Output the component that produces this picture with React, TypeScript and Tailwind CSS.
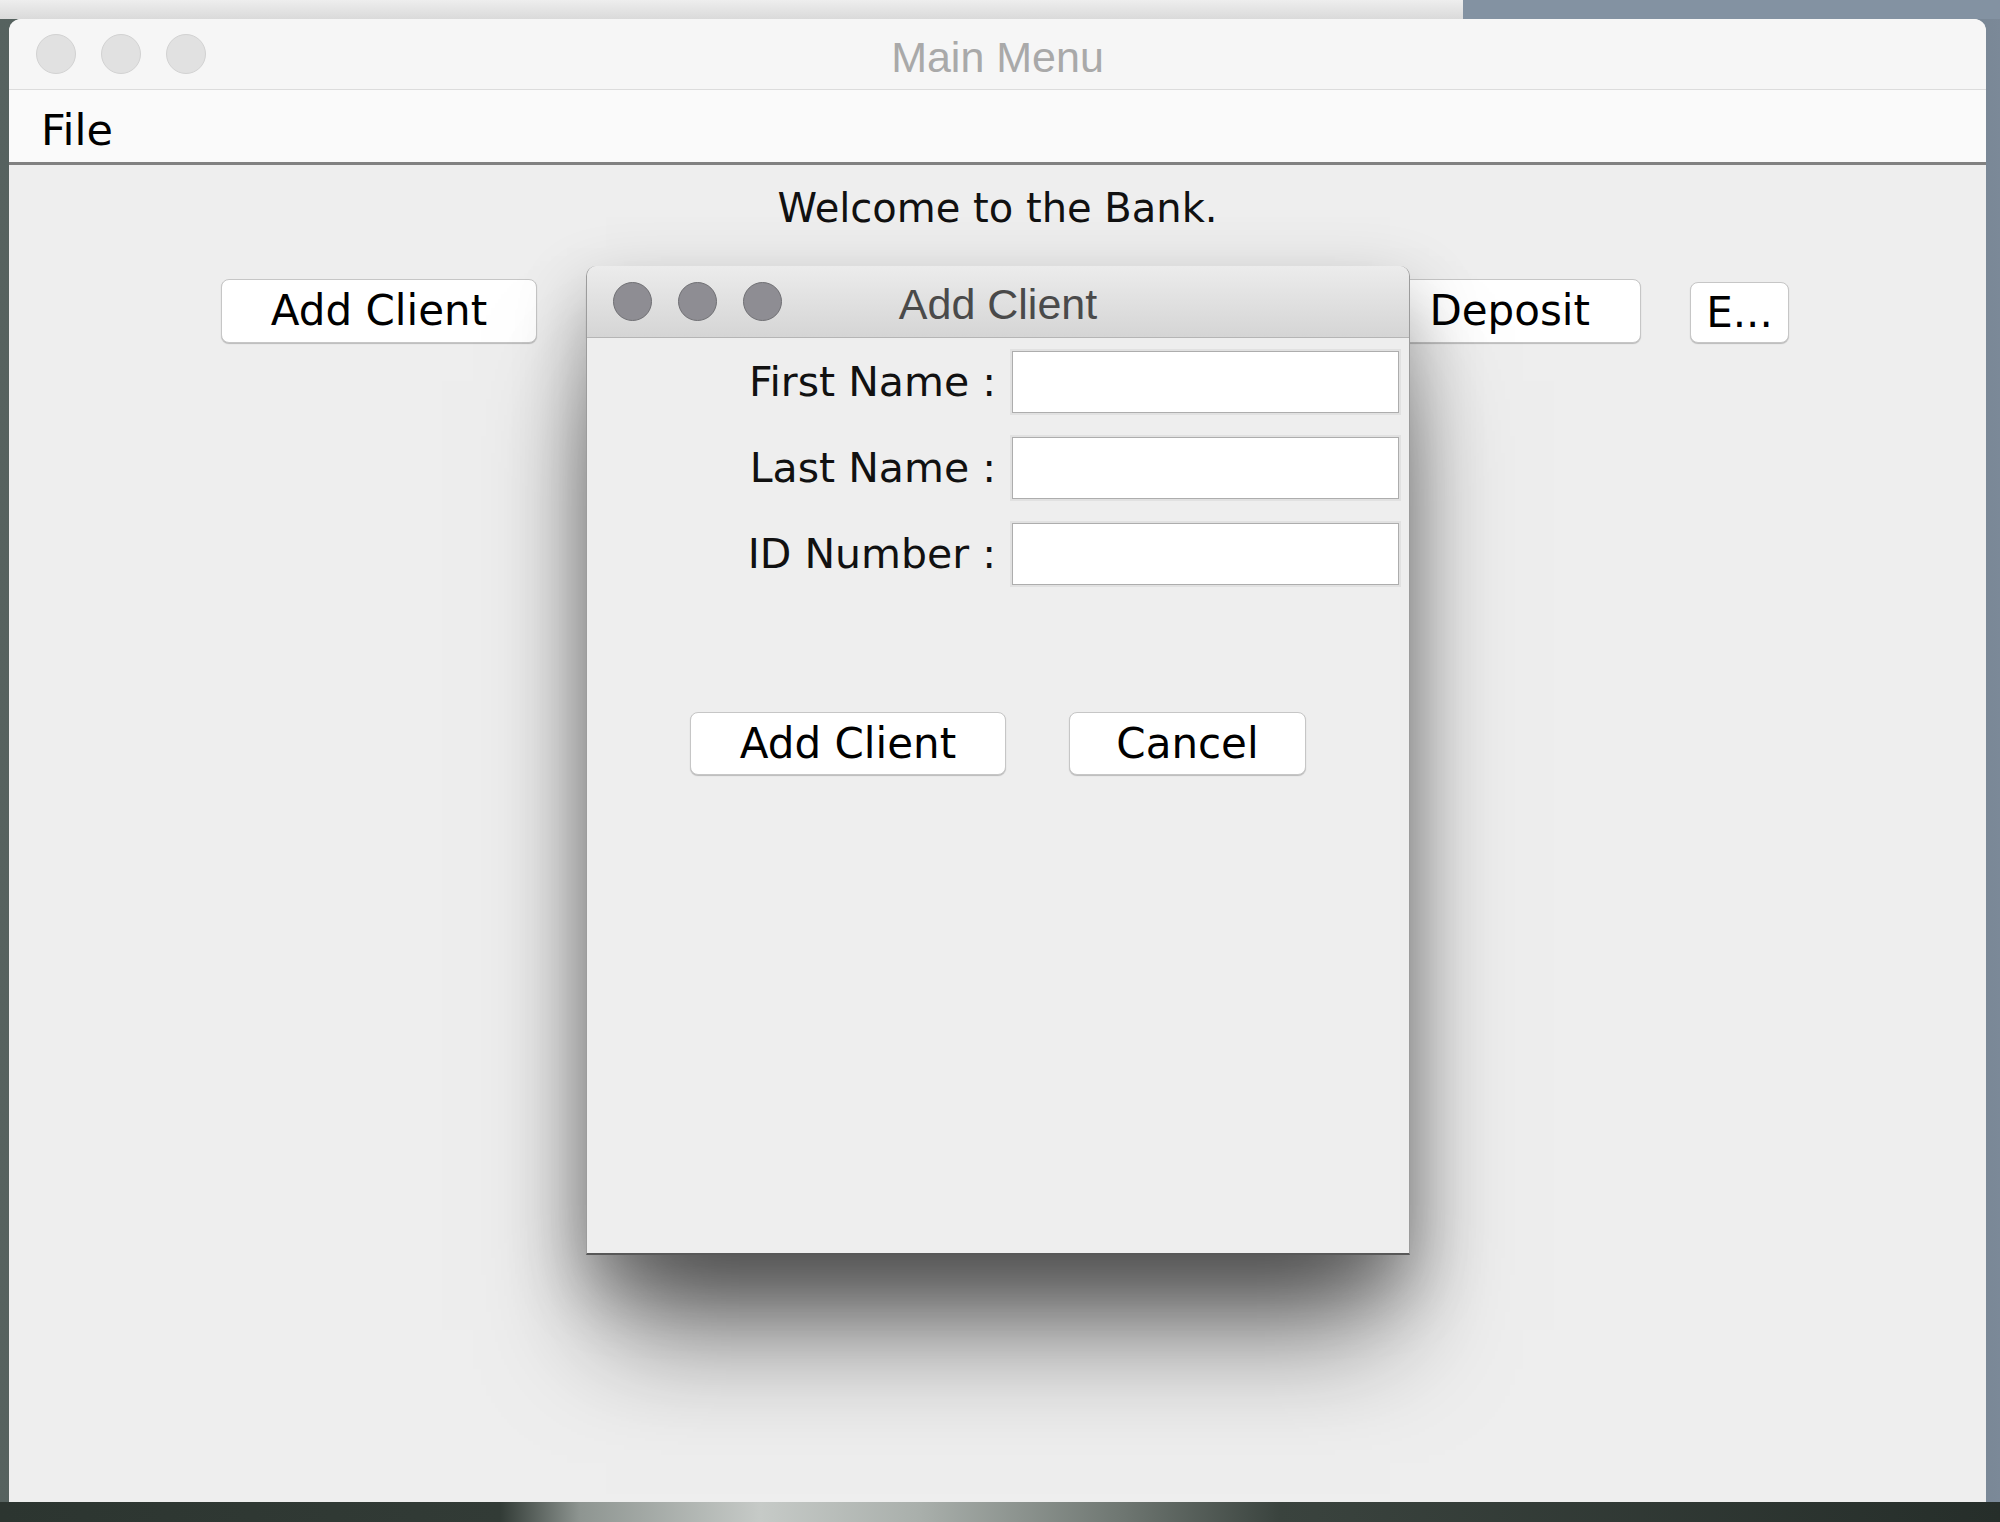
import React from "react";

const ui = { fontFamily: '"DejaVu Sans", Verdana, sans-serif' };
const title = { fontFamily: '"Liberation Sans", Arial, sans-serif' };

function Lights({ active }: { active: boolean }) {
  const dot = active
    ? "w-[39px] h-[39px] rounded-full bg-[#8e8d93] border border-[#707074]"
    : "w-[40px] h-[40px] rounded-full bg-[#e1e1e1] border border-[#d2d2d2]";
  return (
    <div className={`flex items-center h-full ${active ? "pl-[26px] gap-[26px]" : "pl-[27px] gap-[25px]"}`}>
      <div className={dot} />
      <div className={dot} />
      <div className={dot} />
    </div>
  );
}

function Btn({ label, className }: { label?: string; className: string }) {
  return (
    <button
      className={`flex items-center justify-center shrink-0 bg-white border border-[#c6c6c6] rounded-[8px] shadow-[0_1px_1px_rgba(0,0,0,0.22)] text-black text-[42px] leading-none ${className}`}
      style={ui}
    >
      {label}
    </button>
  );
}

function Field({ label }: { label: string }) {
  return (
    <>
      <div className="text-right text-[41px] leading-none text-[#111]" style={ui}>
        {label}
      </div>
      <input
        type="text"
        className="h-[62px] w-[387px] bg-white border border-[#adadad] shadow-[0_0_0_2px_rgba(0,0,0,0.05)] outline-none"
      />
    </>
  );
}

export default function App() {
  return (
    <div className="relative w-[2000px] h-[1522px] overflow-hidden flex bg-[linear-gradient(90deg,#56625f_0%,#3c4744_45%,#566068_80%,#7b8998_100%)]">
      {/* desktop bits peeking round the window */}
      <div className="absolute top-0 left-0 w-[1463px] h-[19px] bg-gradient-to-b from-[#eeeeee] to-[#dadada]" />
      <div className="absolute top-0 left-[1463px] right-0 h-[19px] bg-[#8392a2]" />
      <div className="absolute bottom-0 left-0 right-0 h-[20px] bg-[linear-gradient(90deg,#2c3530_0%,#323b36_25%,#8e9591_29%,#c6cac7_38%,#a9afab_46%,#6f7772_56%,#3a433e_64%,#262e2a_100%)]" />

      {/* main window */}
      <div className="relative ml-[9px] mt-[19px] w-[1977px] h-[1483px] flex flex-col rounded-t-[12px] overflow-hidden bg-[#eeeeee]">
        <div className="relative h-[71px] shrink-0 bg-[#f6f6f6] border-b border-[#dcdcdc]">
          <Lights active={false} />
          <div className="absolute inset-0 flex items-center justify-center pt-[6px]">
            <span className="text-[43px] leading-[48px] text-[#a9a9a9]" style={title}>
              Main Menu
            </span>
          </div>
        </div>

        <div className="h-[75px] shrink-0 bg-[#fafafa] border-b-[3px] border-[#818181] flex items-center pl-[32px] pt-[8px]">
          <span className="text-[43px] leading-[52px] text-black" style={ui}>
            File
          </span>
        </div>

        <div className="flex-1 flex flex-col">
          <div className="pt-[19px] text-center text-[40px] leading-[48px] text-[#111]" style={ui}>
            Welcome to the Bank.
          </div>
          <div className="mt-[47px] flex items-end gap-[49px] pl-[212px]">
            <Btn label="Add Client" className="w-[316px] h-[64px]" />
            {/* these two sit under the dialog */}
            <Btn className="w-[350px] h-[64px]" />
            <Btn className="w-[349px] h-[64px]" />
            <Btn label="Deposit" className="w-[258px] h-[64px] justify-end pr-[50px]" />
            <Btn label="E..." className="w-[99px] h-[61px]" />
          </div>
        </div>

        {/* Add Client dialog */}
        <div className="absolute left-[577px] top-[247px] w-[824px] h-[989px] flex flex-col rounded-t-[10px] bg-[#eeeeee] border-x border-[#9c9c9c] border-b-2 border-b-[#585858] shadow-[0_95px_110px_-20px_rgba(0,0,0,0.55),0_30px_70px_rgba(0,0,0,0.3)]">
          <div className="relative h-[72px] shrink-0 rounded-t-[10px] bg-gradient-to-b from-[#ececec] to-[#d5d5d5] border-b border-[#b5b5b5]">
            <Lights active />
            <div className="absolute inset-0 flex items-center justify-center pt-[4px]">
              <span className="text-[43px] leading-[48px] text-[#4a4a4a]" style={title}>
                Add Client
              </span>
            </div>
          </div>

          <div className="pt-[13px] grid grid-cols-[409px_387px] gap-x-[16px] gap-y-[24px] items-center">
            <Field label="First Name :" />
            <Field label="Last Name :" />
            <Field label="ID Number :" />
          </div>

          <div className="mt-[127px] flex justify-center gap-[63px]">
            <Btn label="Add Client" className="w-[316px] h-[63px]" />
            <Btn label="Cancel" className="w-[237px] h-[63px]" />
          </div>
        </div>
      </div>
    </div>
  );
}
